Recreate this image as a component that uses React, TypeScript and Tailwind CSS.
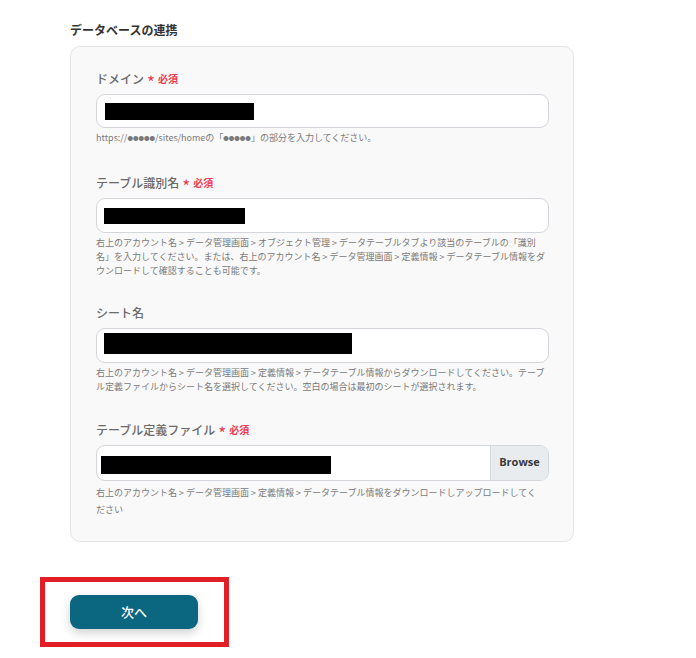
import React from 'react';

const jp = { fontFamily: '"Noto Sans CJK JP", "Noto Sans", sans-serif' };

function Label({ text, required }: { text: string; required?: boolean }) {
  return (
    <div className="flex items-center h-[18px] mb-[6px]">
      <span className="text-[12px] leading-[18px] font-medium text-[#6a6a6a]">{text}</span>
      {required && (
        <>
          <span className="ml-[3px] text-[17px] leading-[18px] text-[#ef3b4f] translate-y-[3px]">*</span>
          <span className="ml-[3px] text-[10px] leading-[18px] font-bold text-[#ef3b4f]">必須</span>
        </>
      )}
    </div>
  );
}

function Redacted({ w, h }: { w: number; h: number }) {
  return <div className="bg-black" style={{ width: w, height: h }} />;
}

function Help({ children, leading = 'leading-[14px]', extra = '' }: { children: React.ReactNode; leading?: string; extra?: string }) {
  return <p className={`mt-[3px] text-[9px] text-[#7a7a7a] ${leading} ${extra}`}>{children}</p>;
}

function Dots() {
  return <span className="text-[5.5px] align-middle">●●●●●</span>;
}

export default function App() {
  return (
    <div className="min-h-screen bg-white pt-[21px]" style={jp}>
      <div className="ml-[70px] w-[504px]">
        <h2 className="text-[12px] leading-[18px] font-bold text-[#333] mb-[7px]">データベースの連携</h2>

        <div className="bg-[#f9f9f9] border border-[#e3e5e8] rounded-[10px] pt-[23px] pb-[23px] pl-[25px] pr-[24px]">
          {/* ドメイン */}
          <Label text="ドメイン" required />
          <div className="h-[34px] bg-white border border-[#d3d6db] rounded-[9px] flex items-center pl-[8px]">
            <Redacted w={149} h={17} />
          </div>
          <Help>
            https://<Dots />/sites/homeの「<Dots />」の部分を入力してください。
          </Help>

          {/* テーブル識別名 */}
          <div className="mt-[28px]">
            <Label text="テーブル識別名" required />
            <div className="h-[35px] bg-white border border-[#d3d6db] rounded-[9px] flex items-center pl-[7px] pt-[2px]">
              <Redacted w={141} h={16} />
            </div>
            <Help>
              右上のアカウント名 &gt; データ管理画面 &gt; オブジェクト管理 &gt; データテーブルタブより該当のテーブルの「識別名」を入力してください。または、右上のアカウント名 &gt; データ管理画面 &gt; 定義情報 &gt; データテーブル情報をダウンロードして確認することも可能です。
            </Help>
          </div>

          {/* シート名 */}
          <div className="mt-[26px]">
            <Label text="シート名" />
            <div className="h-[35px] bg-white border border-[#d3d6db] rounded-[9px] flex items-center pl-[7px] pb-[3px]">
              <Redacted w={248} h={21} />
            </div>
            <Help leading="leading-[14.5px]">
              右上のアカウント名 &gt; データ管理画面 &gt; 定義情報 &gt; データテーブル情報からダウンロードしてください。テーブル定義ファイルからシート名を選択してください。空白の場合は最初のシートが選択されます。
            </Help>
          </div>

          {/* テーブル定義ファイル */}
          <div className="mt-[26px]">
            <Label text="テーブル定義ファイル" required />
            <div className="h-[36px] bg-white border border-[#d3d6db] rounded-[9px] flex items-stretch overflow-hidden">
              <div className="flex-1 flex items-center pl-[4px] pt-[5px]">
                <Redacted w={230} h={18} />
              </div>
              <div
                className="w-[58px] bg-[#e9ecef] border-l border-[#d3d6db] flex items-center justify-center text-[11px] font-bold text-[#3a3a3a]"
                style={{ fontFamily: '"Open Sans", "Liberation Sans", sans-serif' }}
              >
                Browse
              </div>
            </div>
            <Help leading="leading-[17px]" extra="pr-[10px]">
              右上のアカウント名 &gt; データ管理画面 &gt; 定義情報 &gt; データテーブル情報をダウンロードしアップロードしてください
            </Help>
          </div>
        </div>
      </div>

      <div className="ml-[40px] mt-[35px] w-[189px] border-[5px] border-[#e21f26] pt-[13px] pb-[13px] pl-[25px]">
        <button className="w-[128px] h-[34px] rounded-[9px] bg-[#0b6680] text-white text-[13px] font-medium shadow-[0_4px_10px_rgba(0,0,0,0.18)]">
          次へ
        </button>
      </div>
    </div>
  );
}
